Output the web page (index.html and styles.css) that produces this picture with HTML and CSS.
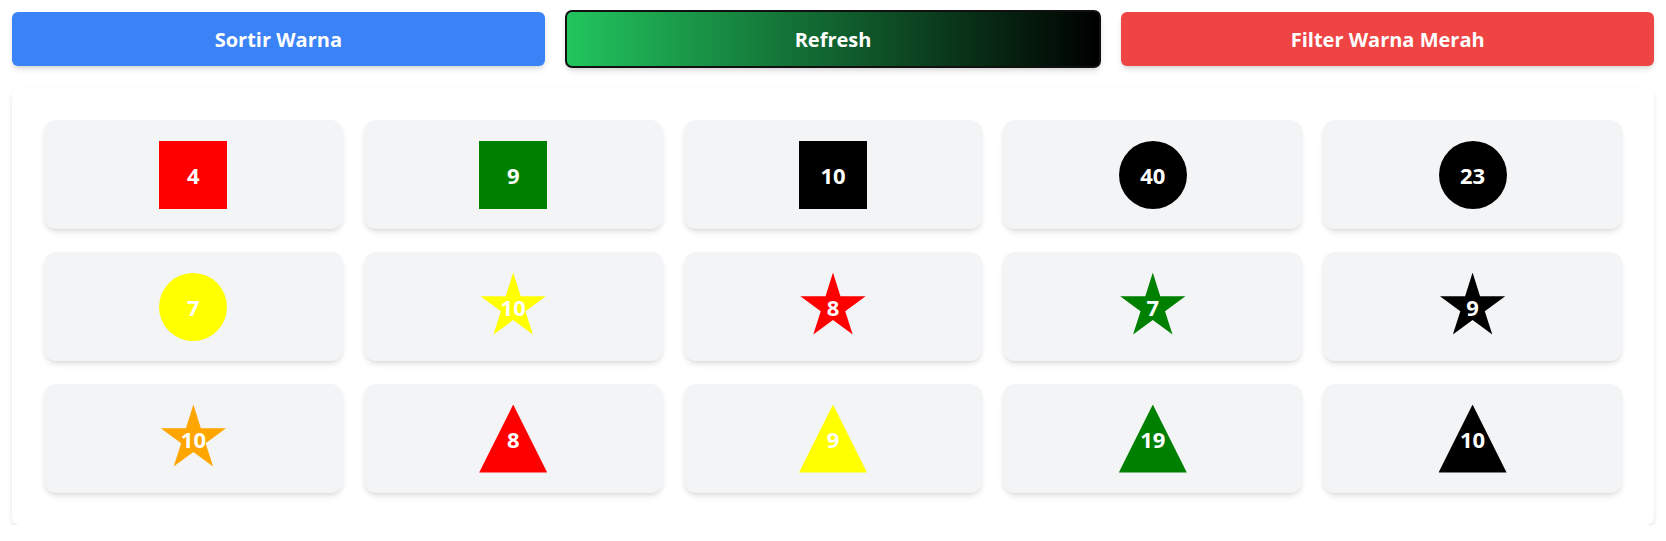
FILE: index.html
```html
<!DOCTYPE html>
<html lang="id">
<head>
<meta charset="utf-8">
<title>Shapes</title>
<link rel="stylesheet" href="styles.css">
</head>
<body>
<div class="toolbar">
  <button class="btn btn-blue">Sortir Warna</button>
  <button class="btn btn-gradient">Refresh</button>
  <button class="btn btn-red">Filter Warna Merah</button>
</div>
<div class="panel">
  <div class="grid">
    <div class="card"><div class="shape square red"><span>4</span></div></div>
    <div class="card"><div class="shape square green"><span>9</span></div></div>
    <div class="card"><div class="shape square black"><span>10</span></div></div>
    <div class="card"><div class="shape circle black"><span>40</span></div></div>
    <div class="card"><div class="shape circle black"><span>23</span></div></div>

    <div class="card"><div class="shape circle yellow"><span>7</span></div></div>
    <div class="card"><div class="shape star yellow"><span>10</span></div></div>
    <div class="card"><div class="shape star red"><span>8</span></div></div>
    <div class="card"><div class="shape star green"><span>7</span></div></div>
    <div class="card"><div class="shape star black"><span>9</span></div></div>

    <div class="card"><div class="shape star orange"><span>10</span></div></div>
    <div class="card"><div class="shape triangle red"><span>8</span></div></div>
    <div class="card"><div class="shape triangle yellow"><span>9</span></div></div>
    <div class="card"><div class="shape triangle green"><span>19</span></div></div>
    <div class="card"><div class="shape triangle black"><span>10</span></div></div>
  </div>
</div>
</body>
</html>
```
FILE: styles.css
```css
* { box-sizing: border-box; }
html, body { background: #ffffff; }
body {
  margin: 0;
  padding: 10px 12px 0 12px;
  font-family: "Open Sans", "Noto Sans", sans-serif;
}
.toolbar {
  display: flex;
  align-items: center;
  gap: 20px;
}
.btn {
  flex: 1 1 0;
  min-width: 0;
  height: 54px;
  border: none;
  border-radius: 6px;
  color: #ffffff;
  font-family: "Open Sans", "Noto Sans", sans-serif;
  font-weight: 700;
  font-size: 20px;
  box-shadow: 0 4px 6px -1px rgba(0,0,0,0.12), 0 2px 4px -2px rgba(0,0,0,0.12);
  cursor: pointer;
}
.btn-blue { background: #3b82f6; }
.btn-red { background: #ef4444; }
.btn-gradient {
  height: 58px;
  background: linear-gradient(to right, #22c55e, #000000);
  border: 2px solid #111111;
  border-radius: 7px;
}
.panel {
  margin-top: 20px;
  background: #ffffff;
  border-radius: 7px;
  padding: 32px;
  box-shadow: 0 4px 6px -1px rgba(0,0,0,0.1), 0 2px 4px -2px rgba(0,0,0,0.1), 0 0 2px rgba(0,0,0,0.04);
}
.grid {
  display: grid;
  grid-template-columns: repeat(5, 1fr);
  column-gap: 21px;
  row-gap: 23px;
}
.card {
  background: #f3f4f6;
  border-radius: 12px;
  height: 109px;
  display: flex;
  align-items: center;
  justify-content: center;
  box-shadow: 0 4px 6px -1px rgba(0,0,0,0.1), 0 2px 4px -2px rgba(0,0,0,0.1);
}
.shape {
  width: 68px;
  height: 68px;
  display: grid;
  place-items: center;
  color: #ffffff;
  font-weight: 700;
  font-size: 22px;
  line-height: 1;
}
.circle { border-radius: 50%; }
.star {
  clip-path: polygon(50% 0%, 61% 35%, 98% 35%, 68% 57%, 79% 91%, 50% 70%, 21% 91%, 32% 57%, 2% 35%, 39% 35%);
}
.triangle {
  clip-path: polygon(50% 0%, 100% 100%, 0% 100%);
}
.red { background: #ff0000; }
.green { background: #008000; }
.black { background: #000000; }
.yellow { background: #ffff00; }
.orange { background: #ffa500; }
```
